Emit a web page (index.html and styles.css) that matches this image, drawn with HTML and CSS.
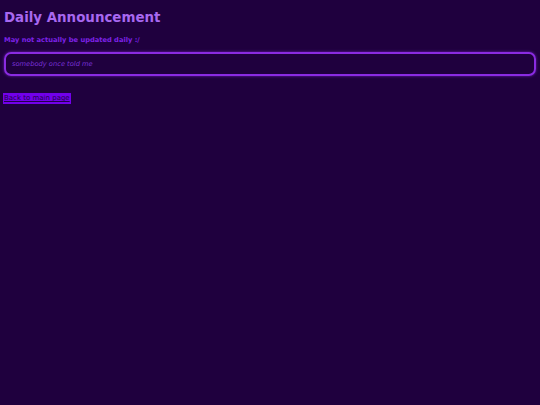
FILE: index.html
```html
<!DOCTYPE html>
<html>
<head>
<meta charset="utf-8">
<link rel="stylesheet" href="styles.css">
</head>
<body>
<h1 class="title">Daily Announcement</h1>
<p class="subtitle">May not actually be updated daily :/</p>
<div class="announcement">somebody once told me</div>
<button class="back"><a href="#" class="back-link">Back to main page</a></button>
</body>
</html>
```
FILE: styles.css
```css
html, body {
  background: #1f003e;
}
body {
  margin: 0;
  padding: 4px;
  font-family: "DejaVu Sans", sans-serif;
}
.title {
  margin: 6px 0 0 0;
  font-size: 13.4px;
  line-height: 16px;
  font-weight: bold;
  color: #a868f0;
}
.subtitle {
  margin: 10px 0 0 0;
  font-size: 6.7px;
  line-height: 8px;
  font-weight: bold;
  color: #7d22e6;
}
.announcement {
  margin-top: 8px;
  height: 20px;
  border: 2px solid #8a2be2;
  border-radius: 7px;
  box-shadow: 0 0 3px rgba(138, 43, 226, 0.7);
  padding: 0 6px;
  display: flex;
  align-items: center;
  font-size: 6.7px;
  font-style: italic;
  color: #7a30d8;
}
.back {
  display: block;
  margin: 17px 0 0 -1px;
  padding: 0 1px;
  border: none;
  background: #7200ea;
  font-family: "DejaVu Sans", sans-serif;
  font-size: 7px;
  line-height: 11px;
}
.back-link {
  color: #22004a;
  text-decoration: underline;
}
```
